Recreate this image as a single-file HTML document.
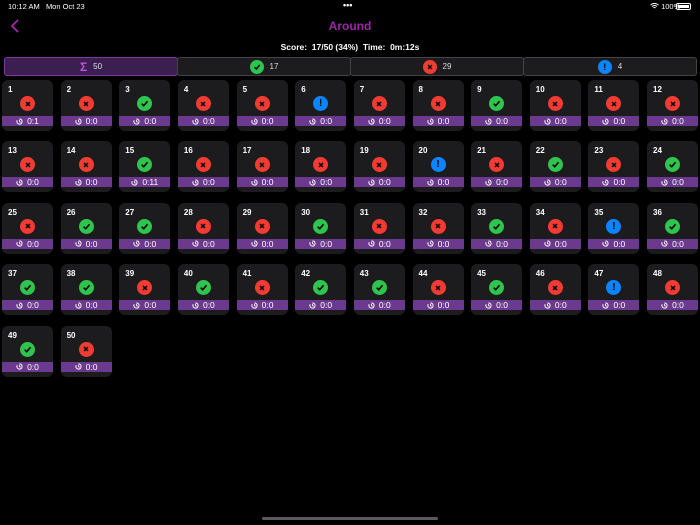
<!DOCTYPE html>
<html><head><meta charset="utf-8"><style>
*{margin:0;padding:0;box-sizing:border-box}
body{width:700px;height:525px;background:#000;color:#fff;font-family:"Liberation Sans",sans-serif;position:relative;overflow:hidden}
.abs{position:absolute}
.st{font-size:7.5px;top:2px}
.title{left:0;width:700px;text-align:center;top:19px;font-size:12px;font-weight:bold;color:#9c27a8}
.score{left:0;width:700px;text-align:center;top:42px;font-size:8.5px;font-weight:bold}
.tab{top:57px;height:19px;background:#1c1c1e;border:1px solid #444446;border-radius:3px;display:flex;align-items:center;justify-content:center;font-size:8px;color:#ddd;gap:6px}
.tab.sel{background:#3b1f50;border-color:#7a3aa0}
.ic{width:14px;height:14px;border-radius:50%;display:flex;align-items:center;justify-content:center}
.x{background:#f23c33}.c{background:#2fc44e}.i{background:#0a84ff}
.card{width:51px;height:51px;background:#1c1c1e;border-radius:6px;overflow:hidden}
.num{position:absolute;left:6px;top:5px;font-size:8px;font-weight:bold}
.card .ic{position:absolute;left:18px;top:16px;width:15px;height:15px}
.bar{position:absolute;left:0;top:36px;width:51px;height:10px;background:#6b3a8e;font-size:8.5px;display:flex;align-items:center;justify-content:center;gap:4px}
</style></head><body>
<div class="abs st" style="left:8px">10:12 AM&nbsp;&nbsp;&nbsp;Mon Oct 23</div>
<div class="abs st" style="left:343px;top:0;font-size:9px;font-weight:bold">•••</div>
<div class="abs st" style="left:650px">
<svg width="9" height="6" viewBox="0 0 9 6"><path d="M0.5 2 Q4.5 -1.2 8.5 2 M2 3.5 Q4.5 1.5 7 3.5 M3.5 5 Q4.5 4 5.5 5" stroke="#fff" stroke-width="1" fill="none"/></svg> 100%</div>
<div class="abs" style="left:676px;top:3px;width:15px;height:7px;border:1px solid #fff;border-radius:2px;padding:1px"><div style="background:#fff;width:100%;height:100%"></div></div>
<svg class="abs" style="left:10px;top:19px" width="10" height="14" viewBox="0 0 10 14"><path d="M7.5 1.5 L2 7 L7.5 12.5" stroke="#a02aa8" stroke-width="1.8" fill="none" stroke-linecap="round"/></svg>
<div class="abs title">Around</div>
<div class="abs score">Score:&nbsp; 17/50 (34%)&nbsp; Time:&nbsp; 0m:12s</div>
<div class="abs tab sel" style="left:4px;width:174px"><span style="color:#c44fe0;font-weight:bold;font-size:12px">Σ</span>50</div>
<div class="abs tab" style="left:177px;width:174px"><span class="ic c"><svg width="8" height="8" viewBox="0 0 8 8"><path d="M1.5 4.2 L3.3 6 L6.7 2" stroke="#000" stroke-width="1.4" fill="none"/></svg></span>17</div>
<div class="abs tab" style="left:350px;width:174px"><span class="ic x"><svg width="8" height="8" viewBox="0 0 8 8"><path d="M2 2L6 6M6 2L2 6" stroke="#000" stroke-width="1.4"/></svg></span>29</div>
<div class="abs tab" style="left:523px;width:174px"><span class="ic i" style="color:#000;font-weight:bold;font-size:9px">!</span>4</div>
<div id="g"></div>
<div class="abs" style="left:262px;top:517px;width:176px;height:3px;border-radius:2px;background:#5a5a5e"></div>
<script>
var s="xxcxxixxcxxx"+"xxcxxxxixcxc"+"xccxxcxxcxic"+"ccxcxccxcxix"+"cx";
var icons={x:'<svg width="8" height="8" viewBox="0 0 8 8"><path d="M2 2L6 6M6 2L2 6" stroke="#000" stroke-width="1.5"/></svg>',
c:'<svg width="9" height="9" viewBox="0 0 8 8"><path d="M1.5 4.2 L3.3 6 L6.7 2" stroke="#000" stroke-width="1.4" fill="none"/></svg>',
i:'<span style="color:#000;font-weight:bold;font-size:10px">!</span>'};
var clk='<svg width="7" height="7" viewBox="0 0 8 8"><path d="M4 1A3 3 0 1 1 1.4 2.5" stroke="#fff" stroke-width="1.1" fill="none"/><path d="M4 2.2V4L5.3 5" stroke="#fff" stroke-width="1" fill="none"/></svg>';
var h="";
for(var k=0;k<50;k++){var r=Math.floor(k/12),c=k%12;
var t=k==0?"0:1":(k==14?"0:11":"0:0");
h+='<div class="abs card" style="left:'+(2+c*58.64).toFixed(1)+'px;top:'+(80+r*61.4).toFixed(1)+'px"><div class="num">'+(k+1)+'</div><div class="ic '+s[k]+'">'+icons[s[k]]+'</div><div class="bar">'+clk+'<span>'+t+'</span></div></div>';}
document.getElementById("g").innerHTML=h;
</script>
</body></html>
